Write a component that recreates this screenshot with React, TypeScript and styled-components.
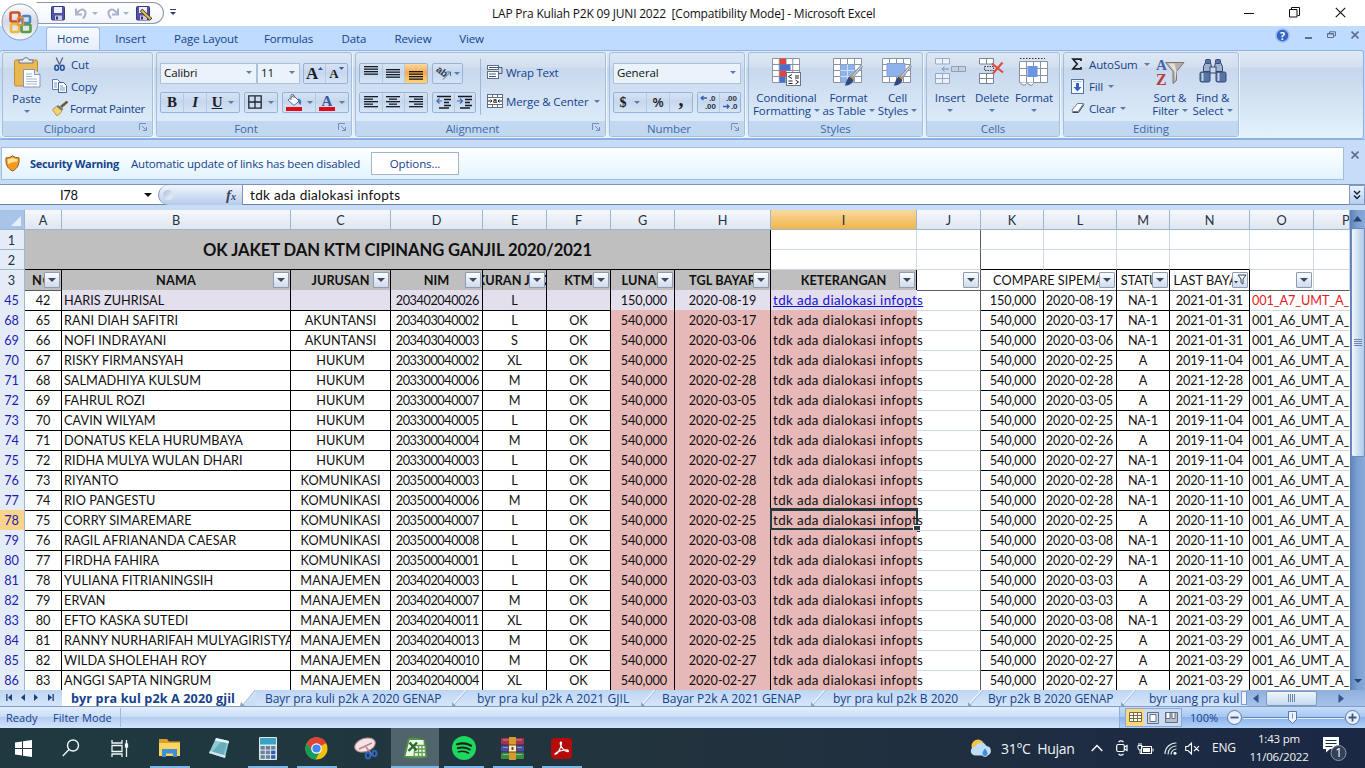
import React from "react";
import styled, { createGlobalStyle, css } from "styled-components";

const UI = `"Open Sans", "Noto Sans", sans-serif`;
const SHEET = `Lato, "Open Sans", sans-serif`;

const Global = createGlobalStyle`
  * { box-sizing: border-box; }
  body { margin: 0; background: #fff; overflow: hidden; }
`;

const Window = styled.div`
  width: 1365px;
  height: 768px;
  display: flex;
  flex-direction: column;
  overflow: hidden;
  font-family: ${UI};
  font-size: 11.5px;
  letter-spacing: -0.1px;
  color: #15428b;
  background: #bfdbff;
  white-space: nowrap;
`;

/* ---------- shared ---------- */

const Arrow = styled.i<{ $c?: string; $s?: number }>`
  display: inline-block;
  flex: none;
  width: 0;
  height: 0;
  border: ${(p) => p.$s ?? 3}px solid transparent;
  border-top-color: ${(p) => p.$c ?? "#5c7ba9"};
  border-bottom: 0;
`;
const Spacer = styled.span<{ $w: number; $grow?: boolean }>`
  width: ${(p) => p.$w}px;
  flex: ${(p) => (p.$grow ? 1 : "none")};
`;

/* ---------- title bar ---------- */

const Top = styled.header`
  position: relative;
  height: 50px;
  flex: none;
`;
const TitleBar = styled.div`
  height: 26px;
  background: #fff;
  display: flex;
  align-items: center;
`;
const Orb = styled.div`
  position: absolute;
  left: 1px;
  top: 3px;
  width: 38px;
  height: 38px;
`;
const QuickBar = styled.div`
  margin-left: 36px;
  width: 128px;
  height: 22px;
  border: 1px solid #8c98b0;
  border-left-color: transparent;
  border-radius: 0 11px 11px 0;
  display: flex;
  align-items: center;
  padding-left: 14px;
  background: linear-gradient(#fff, #f1f5fb);
`;
const QuickItem = styled.span<{ $w: number }>`
  width: ${(p) => p.$w}px;
  height: 16px;
  display: flex;
  align-items: center;
  flex: none;
`;
const MoreMark = styled.div`
  width: 6px;
  margin-left: 6px;
  margin-top: -2px;
  border-top: 1px solid #27406e;
  padding-top: 2px;
  display: flex;
  justify-content: center;
`;
const Caption = styled.div`
  margin-left: 316px;
  width: 400px;
  font-size: 12px;
  letter-spacing: -0.21px;
  color: #111;
  white-space: pre;
  padding-top: 1px;
`;
const WinButtons = styled.div`
  margin-left: auto;
  display: flex;
  gap: 0;
  padding: 0 19px 2px 0;
  svg { display: block; }
`;
const WinButton = styled.span<{ $ml?: number }>`
  margin-left: ${(p) => p.$ml ?? 0}px;
`;
const TabStrip = styled.nav`
  height: 24px;
  display: flex;
  align-items: flex-end;
  padding-left: 46px;
  background: #bfdbff;
`;
const RibbonTab = styled.div<{ $w: number; $on?: boolean }>`
  width: ${(p) => p.$w}px;
  height: 23px;
  line-height: 21px;
  text-align: center;
  font-size: 11.5px;
  border-radius: 3px 3px 0 0;
  border: 1px solid transparent;
  border-bottom: 0;
  ${(p) =>
    p.$on &&
    css`
      background: linear-gradient(#f7fbff, #e4eefa);
      border-color: #9cb9e0;
      box-shadow: inset 0 1px #fff;
    `}
`;
const TabTools = styled.div`
  margin-left: auto;
  display: flex;
  align-items: center;
  height: 26px;
  gap: 15px;
  padding: 0 6px 4px 0;
`;

/* ---------- ribbon ---------- */

const Ribbon = styled.section`
  height: 89px;
  flex: none;
  margin-right: 1px;
  padding: 1px 2px 0;
  display: flex;
  gap: 3px;
  border: 1px solid #8db2e3;
  border-left: 0;
  border-radius: 3px;
  background: linear-gradient(#dfe9f5 0, #d3e0f0 16px, #c5d6ec 17px, #e4f2fc 100%);
`;
const Group = styled.div<{ $w: number }>`
  width: ${(p) => p.$w}px;
  height: 85px;
  flex: none;
  display: flex;
  flex-direction: column;
  border: 1px solid #a4bfde;
  border-radius: 3px;
  overflow: hidden;
  box-shadow: 1px 1px #eef5fd;
  background: linear-gradient(#dde8f5 0, #d2dfef 14px, #c8d8ed 15px, #dcebfa 68px);
`;
const GroupBody = styled.div<{ $p?: string }>`
  height: 68px;
  display: flex;
  padding: ${(p) => p.$p ?? "0"};
`;
const GroupLabel = styled.div<{ $launch?: boolean }>`
  flex: 1;
  line-height: 15px;
  position: relative;
  text-align: center;
  color: #3e6aaa;
  background: #c2d8f1;
  padding-right: ${(p) => (p.$launch ? 16 : 0)}px;
  svg { position: absolute; right: 4px; top: 2px; }
`;
const Column = styled.div<{ $w?: number; $p?: string; $gap?: number }>`
  width: ${(p) => (p.$w ? p.$w + "px" : "auto")};
  flex: none;
  display: flex;
  flex-direction: column;
  padding: ${(p) => p.$p ?? "0"};
  gap: ${(p) => p.$gap ?? 0}px;
  align-items: flex-start;
`;
const Command = styled.div<{ $gap?: number; $ls?: number }>`
  height: 22px;
  display: flex;
  align-items: center;
  gap: ${(p) => p.$gap ?? 4}px;
  letter-spacing: ${(p) => p.$ls ?? -0.2}px;
`;
const BigCommand = styled.div<{ $w: number }>`
  width: ${(p) => p.$w}px;
  flex: none;
  display: flex;
  flex-direction: column;
  align-items: center;
  padding-top: 4px;
  line-height: 13px;
  letter-spacing: -0.1px;
  svg { display: block; margin-bottom: 4px; flex: none; }
`;
const Line = styled.span`
  display: flex;
  align-items: center;
  gap: 3px;
`;
const Drop = styled.span`
  height: 13px;
  display: flex;
  align-items: center;
`;
const ToolRow = styled.div<{ $gap?: number }>`
  display: flex;
  align-items: center;
  gap: ${(p) => p.$gap ?? 4}px;
  height: 22px;
`;
const Box = styled.div<{ $w: number }>`
  width: ${(p) => p.$w}px;
  height: 21px;
  display: flex;
  align-items: center;
  justify-content: space-between;
  padding: 0 4px 1px 3px;
  color: #111;
  background: #eaf2fb;
  border: 1px solid #abc1de;
`;
const Seg = styled.div`
  height: 21px;
  display: flex;
  border: 1px solid #97b3d8;
  border-radius: 2px;
  background: linear-gradient(#d6e3f3, #c6d7ed 45%, #d5e5f7);
`;
const SegItem = styled.div<{ $w: number; $on?: boolean; $last?: boolean; $gap?: number }>`
  width: ${(p) => p.$w}px;
  display: flex;
  align-items: center;
  justify-content: center;
  gap: ${(p) => p.$gap ?? 4}px;
  color: #1c1c28;
  border-right: ${(p) => (p.$last ? "0" : "1px solid #b4c9e4")};
  ${(p) => p.$on && css`background: linear-gradient(#fbd9a0, #f9a84a 45%, #ffd673);`}
`;
const Letter = styled.span<{ $size?: number; $i?: boolean; $u?: boolean; $up?: number }>`
  font: ${(p) => (p.$i ? "italic" : "normal")} bold ${(p) => p.$size ?? 14}px/15px "Liberation Serif", serif;
  text-decoration: ${(p) => (p.$u ? "underline" : "none")};
  padding-bottom: ${(p) => p.$up ?? 0}px;
`;
const Percent = styled.span`
  font-size: 13px;
  font-weight: 600;
`;
const SizeMark = styled.svg`
  align-self: flex-start;
  margin: 3px 0 0 -4px;
`;
const Rule = styled.div`
  width: 1px;
  height: 56px;
  margin: 6px 4px 0;
  background: #9bb7da;
`;

/* ---------- message + formula ---------- */

const MessageRow = styled.section`
  height: 45px;
  flex: none;
  padding-top: 7px;
  display: flex;
  background: #c6dcf8;
  border-top: 1px solid #8aaede;
`;
const Message = styled.div`
  width: 1343px;
  height: 33px;
  margin-left: 1px;
  display: flex;
  align-items: center;
  padding: 0 0 1px 3px;
  border: 1px solid #9fbedc;
  background: linear-gradient(#fff, #f1faff 45%, #e2f2fd);
  b { margin-left: 10px; width: 101px; letter-spacing: -0.32px; font-size: 11px; }
`;
const MessageText = styled.span`
  width: 240px;
  letter-spacing: -0.19px;
`;
const OptionButton = styled.div`
  width: 88px;
  height: 23px;
  line-height: 21px;
  text-align: center;
  background: #fff;
  border: 1px solid #9fb5d0;
`;
const MessageClose = styled.div`
  line-height: 0;
  padding: 4px 0 0 7px;
`;
const FormulaRow = styled.section`
  height: 26px;
  flex: none;
  display: flex;
  color: #111;
  font-family: ${SHEET};
  font-size: 13px;
  letter-spacing: 0;
  border-top: 1px solid #7b95b5;
  border-bottom: 5px solid #c9dcf5;
  background: #fff;
  box-shadow: inset 0 -1px #6c84a4;
`;
const NameBox = styled.div`
  width: 158px;
  display: flex;
  align-items: center;
  padding: 0 6px 0 60px;
  justify-content: space-between;
  letter-spacing: -0.3px;
`;
const FxArea = styled.div`
  width: 85px;
  height: 20px;
  display: flex;
  align-items: center;
  justify-content: space-between;
  padding: 0 6px 0 4px;
  border-radius: 10px 0 0 10px;
  border-left: 1px solid #8095b5;
  border-right: 1px solid #8095b5;
  background: linear-gradient(#f1f6fd, #b5cbec);
`;
const Knob = styled.span`
  width: 10px;
  height: 10px;
  border-radius: 50%;
  background: linear-gradient(135deg, #a9bcd9, #f4f8fd);
`;
const Fx = styled.i`
  font: italic bold 15px "Liberation Serif", serif;
  color: #39465e;
  small { font-size: 10px; }
`;
const FormulaText = styled.div`
  flex: 1;
  line-height: 21px;
  padding-left: 7px;
  font-size: 13.6px;
  letter-spacing: 0.27px;
`;
const Expand = styled.div`
  width: 16px;
  height: 20px;
  display: flex;
  align-items: center;
  justify-content: center;
  border: 1px solid #7f9bc4;
  background: linear-gradient(#e9f2fd, #b4cdee);
`;

/* ---------- grid ---------- */

const COLS = [25, 37, 229, 100, 92, 64, 64, 64, 96, 146, 64, 63, 73, 53, 80, 64, 36];
const TEMPLATE = COLS.map((c) => c + "px").join(" ");

const GridArea = styled.main`
  height: 480px;
  flex: none;
  display: flex;
  background: #fff;
`;
const Sheet = styled.div`
  width: 1350px;
  overflow: hidden;
  font-family: ${SHEET};
  font-size: 12.7px;
  letter-spacing: -0.1px;
  color: #111;
`;
const Row = styled.div`
  display: grid;
  grid-template-columns: ${TEMPLATE};
  height: 20px;
`;
const HeadCell = styled.div<{ $on?: boolean }>`
  text-align: center;
  line-height: 21px;
  color: #27303f;
  border-right: 1px solid #9eb6ce;
  border-bottom: 1px solid #9eb6ce;
  background: ${(p) =>
    p.$on ? "linear-gradient(#f9d99f, #f1b54c)" : "linear-gradient(#f6f9fc, #dfe6f1)"};
  overflow: hidden;
`;
const LastCol = styled.span`
  padding-left: 28px;
`;
const Corner = styled.div`
  background: #a9c4e9;
  border-right: 1px solid #9eb6ce;
  border-bottom: 1px solid #9eb6ce;
  display: flex;
  align-items: flex-end;
  justify-content: flex-end;
  padding: 3px;
`;
const RowHead = styled.div<{ $blue?: boolean; $on?: boolean }>`
  text-align: center;
  line-height: 20px;
  color: ${(p) => (p.$blue ? "#1d1db4" : "#27303f")};
  border-right: 1px solid #9eb6ce;
  border-bottom: 1px solid #9eb6ce;
  padding-right: 1px;
  background: ${(p) => (p.$on ? "#fbd48c" : "#e4ecf7")};
`;
type CellProps = {
  $bg?: string;
  $align?: string;
  $r?: string;
  $b?: string;
  $bold?: boolean;
  $clip?: boolean;
  $color?: string;
  $span?: number;
  $ls?: number;
};
const Cell = styled.div<CellProps>`
  position: relative;
  min-width: 0;
  display: flex;
  justify-content: ${(p) => p.$align ?? "center"};
  line-height: 20px;
  padding: 0 ${(p) => (p.$align === "flex-end" ? 3 : 2)}px;
  background: ${(p) => p.$bg ?? "transparent"};
  color: ${(p) => p.$color ?? "inherit"};
  font-weight: ${(p) => (p.$bold ? 700 : 400)};
  letter-spacing: ${(p) => p.$ls ?? -0.1}px;
  border-right: 1px solid ${(p) => p.$r ?? "#000"};
  border-bottom: 1px solid ${(p) => p.$b ?? "#000"};
  overflow: ${(p) => (p.$clip ? "hidden" : "visible")};
  ${(p) => p.$span && css`grid-column: span ${p.$span};`}
`;
const Pad = styled.span`
  padding-right: 4px;
`;
const Pad2 = styled.span`
  padding-right: 3px;
`;
const Over = styled.span`
  position: relative;
  z-index: 1;
  font-size: 13.4px;
  letter-spacing: 0.35px;
`;
const TitleRows = styled.div`
  display: grid;
  grid-template-columns: ${TEMPLATE};
  grid-template-rows: 20px 20px;
`;
const SheetTitle = styled.div`
  grid-column: 2 / 10;
  grid-row: 1 / 3;
  display: flex;
  align-items: center;
  justify-content: center;
  font-size: 16.6px;
  font-weight: 700;
  letter-spacing: -0.08px;
  background: #bfbfbf;
  border-right: 1px solid #000;
  border-bottom: 1px solid #000;
`;
const FilterBtn = styled.span`
  position: absolute;
  right: 1px;
  top: 2px;
  width: 16px;
  height: 16px;
  display: flex;
  align-items: center;
  justify-content: center;
  border: 1px solid #8d9bb3;
  border-radius: 1px;
  background: linear-gradient(#fbfcfe, #d0dbeb);
`;
const Link = styled.span`
  color: #1414d8;
  text-decoration: underline;
`;
const Picked = styled.span`
  position: absolute;
  left: -1px;
  top: -2px;
  width: 148px;
  height: 23px;
  border: 3px solid #26393c;
  border-left-width: 2px;
  border-right-width: 2px;
  &::after {
    content: "";
    position: absolute;
    right: -4px;
    bottom: -4px;
    width: 6px;
    height: 6px;
    background: #26393c;
    border-left: 1px solid #fff;
    border-top: 1px solid #fff;
  }
`;
const VScroll = styled.div`
  width: 15px;
  display: flex;
  flex-direction: column;
  align-items: center;
  background: linear-gradient(90deg, #5c83b8, #7ba0d2 50%, #86a9d9);
`;
const VButton = styled.div<{ $h: number }>`
  height: ${(p) => p.$h}px;
  display: flex;
  align-items: center;
`;
const VThumb = styled.div`
  width: 14px;
  height: 229px;
  display: flex;
  align-items: center;
  justify-content: center;
  border: 1px solid #6d8db8;
  border-radius: 2px;
  background: linear-gradient(90deg, #f3f8fe, #cfdff2 50%, #b2caea);
`;

/* ---------- sheet tabs / status ---------- */

const SheetTabs = styled.div`
  height: 17px;
  flex: none;
  display: flex;
  border-bottom: 1px solid #7f9cc3;
  background: linear-gradient(#bed5f2, #d6e6fa);
`;
const TabNav = styled.div`
  width: 62px;
  display: flex;
  align-items: center;
  padding: 0 5px 2px 3px;
`;
const SheetTab = styled.div<{ $w: number; $on?: boolean; $pad: number; $ls?: number }>`
  position: relative;
  width: ${(p) => p.$w}px;
  flex: none;
  padding-left: ${(p) => p.$pad}px;
  line-height: 17px;
  font-size: ${(p) => (p.$on ? 12.6 : 12)}px;
  font-weight: ${(p) => (p.$on ? 700 : 400)};
  letter-spacing: ${(p) => p.$ls ?? -0.05}px;
  background: ${(p) => (p.$on ? "#fff" : "transparent")};
  svg { position: absolute; right: -12px; top: 0; z-index: 1; }
`;
const Splitter = styled.div`
  width: 6px;
  height: 14px;
  margin-top: 1px;
  border: 1px solid #7d9cc8;
  background: #eef5fd;
`;
const HScroll = styled.div`
  flex: 1;
  display: flex;
  align-items: center;
  padding: 0 21px 0 6px;
  background: linear-gradient(#8fb0de, #a6c2e9);
`;
const HThumb = styled.div`
  width: 51px;
  height: 15px;
  margin: 0 auto 0 7px;
  display: flex;
  justify-content: center;
  align-items: center;
  border: 1px solid #7b98c0;
  border-radius: 2px;
  background: linear-gradient(#f0f6fd, #c5d8f0);
`;
const Status = styled.div`
  height: 21px;
  flex: none;
  display: flex;
  align-items: center;
  font-size: 11px;
  letter-spacing: 0.05px;
  background: linear-gradient(#e3effd, #cadef8 45%, #b4cdf0 50%, #d3e5fc);
`;
const StatusText = styled.span<{ $w: number; $ml: number }>`
  margin-left: ${(p) => p.$ml}px;
  padding-bottom: 1px;
  width: ${(p) => p.$w}px;
`;
const Divider = styled.span`
  width: 1px;
  height: 19px;
  background: #9dbbe2;
`;
const StatusRight = styled.div`
  margin-left: auto;
  width: 246px;
  height: 21px;
  display: flex;
  align-items: center;
  padding-left: 5px;
  border-left: 1px solid #8fb0db;
  background: linear-gradient(#c5dcfb, #a9c8f2 45%, #8cb3e9 50%, #b3d2fa);
`;
const Views = styled.div`
  display: flex;
  border: 1px solid #8ba9d0;
  height: 19px;
  width: 57px;
  background: #c9dcf4;
`;
const View = styled.span<{ $on?: boolean }>`
  width: 18.5px;
  display: flex;
  align-items: center;
  justify-content: center;
  background: ${(p) => (p.$on ? "#fbd87f" : "transparent")};
`;

/* ---------- taskbar ---------- */

const Taskbar = styled.footer`
  height: 40px;
  flex: none;
  display: flex;
  font-family: ${UI};
  color: #f2f5f7;
  letter-spacing: -0.2px;
  background: linear-gradient(90deg, #1e3a40, #22343d 45%, #1f2e40 70%, #1a2844);
`;
const Task = styled.div<{ $w: number; $open?: boolean; $on?: boolean }>`
  width: ${(p) => p.$w}px;
  display: flex;
  align-items: center;
  justify-content: center;
  ${(p) => p.$on && css`background: #50656b;`}
  ${(p) =>
    p.$open &&
    css`
      background-image: linear-gradient(#7ab6e6, #7ab6e6);
      background-repeat: no-repeat;
      background-position: bottom;
      background-size: ${p.$on ? "100%" : "40px"} 2px;
    `}
`;
const Tray = styled.div`
  margin-left: auto;
  width: 395px;
  display: flex;
  align-items: center;
`;
const Weather = styled.span`
  margin-left: 9px;
  width: 89px;
  font-size: 14px;
  letter-spacing: -0.3px;
  white-space: pre;
`;
const TrayIcon = styled.span<{ $w: number }>`
  width: ${(p) => p.$w}px;
  display: flex;
`;
const Lang = styled.span`
  width: 33px;
  font-size: 12px;
  padding-bottom: 2px;
`;
const Clock = styled.div`
  width: 68px;
  text-align: center;
  font-size: 11.5px;
  letter-spacing: -0.2px;
  line-height: 18px;
  padding-bottom: 1px;
`;

/* ---------- drawings ---------- */

const OfficeLogo = () => (
  <svg width="38" height="38" viewBox="0 0 38 38">
    <defs>
      <linearGradient id="orb" x1="0" y1="0" x2="0" y2="1">
        <stop offset="0" stopColor="#fff" />
        <stop offset=".5" stopColor="#d3dae6" />
        <stop offset="1" stopColor="#f8fbff" />
      </linearGradient>
    </defs>
    <circle cx="19" cy="19" r="18" fill="url(#orb)" stroke="#8a9ab4" />
    <g fill="none" strokeWidth="2.6" strokeLinejoin="round">
      <rect x="9.5" y="9.5" width="9" height="9" rx="1.500" stroke="#cf4f2a" />
      <rect x="21.5" y="13" width="7.500" height="7" rx="1.500" stroke="#4a86c4" />
      <rect x="10" y="21" width="8" height="8" rx="1.500" stroke="#efb93c" />
      <rect x="20.5" y="21.5" width="9" height="7.500" rx="1.500" stroke="#5a9a48" />
      <path d="M16.500 14.500h6v7.500h-6z" stroke="#e9953b" strokeWidth="1.300" />
    </g>
  </svg>
);
const Floppy = ({ pen }: { pen?: boolean }) => (
  <svg width="16" height="15" viewBox="0 0 16 15">
    <rect x=".5" y=".5" width="13" height="13.5" rx="1" fill="#5352a5" stroke="#37377e" />
    <rect x="3" y="1" width="8" height="6" fill="#eef1fa" />
    <rect x="4" y="9.5" width="7" height="4.5" fill="#c9cde6" />
    <rect x="5" y="10.5" width="2" height="3" fill="#37377e" />
    {pen && <path d="M5 4l10 9.500" stroke="#3a3320" strokeWidth="3.400" />}
    {pen && <path d="M5.500 4.500l9 8.500" stroke="#e8c34a" strokeWidth="2" />}
  </svg>
);
const Undo = ({ flip }: { flip?: boolean }) => (
  <svg width="14" height="13" viewBox="0 0 14 13">
    <g transform={flip ? "translate(14 0) scale(-1 1)" : undefined} fill="none" stroke="#a9b3c8" strokeWidth="2">
      <path d="M2 1.500v6h6" />
      <path d="M3 6.500C5 3 8 1.500 10.500 3.500c2 2 1 5-1.500 8" />
    </g>
  </svg>
);
const PasteIcon = () => (
  <svg width="28" height="31" viewBox="0 0 28 31">
    <rect x="1.500" y="3" width="23" height="26" rx="1.500" fill="#eab755" stroke="#c58a2f" />
    <path d="M6 6V3h4c0-3 6-3 6 0h4v3z" fill="#e8edf3" stroke="#6d7786" />
    <path d="M10.500 12.500h11l5.500 5V30H10.500z" fill="#fbfdff" stroke="#8496b3" />
    <path d="M21.500 12.500v5H27" fill="#dbe5f2" stroke="#8496b3" />
    <path d="M13 17h6M13 19.500h6M13 22h11M13 24.500h11M13 27h11" stroke="#a5b7d1" />
  </svg>
);
const CutIcon = () => (
  <svg width="15" height="15" viewBox="0 0 16 15" fill="none">
    <path d="M4.500 0l4 8.500M11.500 0l-4 8.500" stroke="#5b6c8c" strokeWidth="1.500" />
    <ellipse cx="5" cy="11" rx="2" ry="2.600" stroke="#28509b" strokeWidth="1.600" />
    <ellipse cx="11" cy="11" rx="2" ry="2.600" stroke="#28509b" strokeWidth="1.600" />
  </svg>
);
const CopyIcon = () => (
  <svg width="15" height="14" viewBox="0 0 15 14">
    <path d="M.5 .5h5l3 3v7h-8z" fill="#fff" stroke="#5b7cb0" />
    <path d="M6.500 3.500h5l3 3v7h-8z" fill="#fff" stroke="#41649c" />
    <path d="M2 4h3M2 6h3M2 8h3M8 7h3M8 9h5M8 11h5" stroke="#7897c4" />
  </svg>
);
const BrushIcon = () => (
  <svg width="16" height="15" viewBox="0 0 16 15">
    <path d="M15.500 0.500L9 6" stroke="#6d5a34" strokeWidth="2.600" />
    <path d="M6 4l5.500 4-1.800 1.600L4.500 5.500z" fill="#6b7484" />
    <path d="M4.500 5.500l5.300 4.200C9 12 7 14 4.500 14.500L0.500 8.500z" fill="#f3d272" stroke="#a98322" strokeWidth=".8" />
  </svg>
);
const Launcher = () => (
  <svg width="9" height="9" viewBox="0 0 9 9" fill="none" stroke="#6f8fbd">
    <path d="M.5 7V.5H7" />
    <path d="M3 3l4 4M7.500 4v3.500H4" />
  </svg>
);
const Lines = ({ rows, y = 0 }: { rows: [number, number][]; y?: number }) => (
  <svg width="15" height="14" viewBox="0 0 15 14">
    {rows.map(([x, w], i) => (
      <rect key={i} x={x} y={y + i * 2.500} width={w} height="1.300" fill="#151a26" />
    ))}
  </svg>
);
const Indent = ({ out }: { out?: boolean }) => (
  <svg width="16" height="14" viewBox="0 0 16 14">
    <path d="M1 1.500h14M8 4.500h7M8 7.500h5M8 10.500h7M3 12.900h10" stroke="#151a26" strokeWidth="1.500" />
    <path d={out ? "M6 6H1M3.500 3.500L1 6l2.500 2.500" : "M0 6h5M3 3.500L5.500 6 3 8.500"} stroke="#3d67b0" fill="none" strokeWidth="1.200" />
  </svg>
);
const Orient = () => (
  <svg width="17" height="16" viewBox="0 0 17 16">
    <text x="0" y="9" transform="rotate(38 5 8)" fontSize="10" fontFamily="Liberation Sans" fontWeight="700" fill="#333b4c">ab</text>
    <path d="M8 14.500L15 7.500M11.500 7h4v4" stroke="#4f668d" fill="none" />
  </svg>
);
const WrapIcon = () => (
  <svg width="16" height="16" viewBox="0 0 16 16" fill="none">
    <rect x=".5" y="1.500" width="11" height="4" fill="#fff" stroke="#5c6d88" />
    <rect x=".5" y="7.500" width="11" height="7" fill="#fff" stroke="#5c6d88" />
    <path d="M2 3.500h13v6h-3M2 10h7M2 12.500h7" stroke="#4c5870" />
  </svg>
);
const MergeIcon = () => (
  <svg width="16" height="16" viewBox="0 0 16 16" fill="none">
    <rect x=".5" y="1.500" width="15" height="13" fill="#fff" stroke="#5c6d88" />
    <path d="M5.500 1.500v3M10.500 1.500v3M5.500 11.500v3M10.500 11.500v3M.5 4.500h15M.5 11.500h15" stroke="#5c6d88" />
    <path d="M1 8h4M15 8h-4M3.500 6.500L5 8 3.500 9.500M12.500 6.500L11 8l1.500 1.500" stroke="#222" />
    <text x="6" y="10" fontSize="7" fontFamily="Liberation Sans" fontWeight="700" fill="#222">a</text>
  </svg>
);
const BordersIcon = () => (
  <svg width="14" height="14" viewBox="0 0 14 14" fill="none" stroke="#1d2433">
    <path d="M.8 .8h12.400v12.400H.8zM7 1v12M1 7h12" strokeWidth="1.300" />
  </svg>
);
const BucketIcon = () => (
  <svg width="18" height="17" viewBox="0 0 18 17">
    <path d="M3 6l5.500-4.500L14 7l-5 4.500z" fill="#f5f8fc" stroke="#5f6e87" />
    <path d="M6 6V1.500c0-1.500 3-1.500 3 0V4" fill="none" stroke="#5f6e87" />
    <path d="M13 4.500c3 .5 4 3 2.500 6.500-2-1-2.500-3-2.500-6.500z" fill="#4474b8" />
    <rect x="1" y="13" width="16" height="4" fill="#e30b17" />
  </svg>
);
const FontColorIcon = () => (
  <svg width="16" height="17" viewBox="0 0 16 17">
    <text x="2.500" y="11.500" fontSize="15" fontFamily="Liberation Serif" fontWeight="700" fill="#35599c">A</text>
    <rect x="0" y="13" width="16" height="4" fill="#e30b17" />
  </svg>
);
const Decimals = ({ top, bottom, left }: { top: string; bottom: string; left?: boolean }) => (
  <svg width="18" height="16" viewBox="0 0 18 16">
    <g fontFamily="Liberation Sans" fontWeight="700" fontSize="8" fill="#2a3347">
      <text x={left ? 9 : 5} y="7">{top}</text>
      <text x={left ? 5 : 10} y="15">{bottom}</text>
    </g>
    <path d={left ? "M7 4H1M3.500 2L1 4l2.500 2" : "M2 12.500h6M6 10.500l2 2-2 2"} stroke="#2f62b5" fill="none" strokeWidth="1.300" />
  </svg>
);
const cellGrid = (x: number, y: number, w: number, h: number, nx: number, ny: number) => {
  let d = `M${x} ${y}h${w}v${h}h${-w}z`;
  for (let i = 1; i < nx; i++) d += `M${x + (w * i) / nx} ${y}v${h}`;
  for (let i = 1; i < ny; i++) d += `M${x} ${y + (h * i) / ny}h${w}`;
  return d;
};
const Brush = () => (
  <g>
    <path d="M29 8.500L19 20" stroke="#8c96a8" strokeWidth="3" />
    <path d="M29 8.500L19 20" stroke="#e3e8ef" strokeWidth="1" />
    <path d="M16.500 19.500l4 3c-1 4-4 6-9 6 2-2 1.500-6 5-9z" fill="#33497c" />
    <path d="M17 18.500l3.500 3.200" stroke="#b99a3d" strokeWidth="2.200" />
  </g>
);
const CondIcon = () => (
  <svg width="30" height="30" viewBox="0 0 30 30">
    <path d={cellGrid(0.5, 1.500, 27, 24, 4, 4)} fill="#fff" stroke="#8a93a3" />
    <path d="M7.500 1.500h6.500v6H7.500zM7.500 13.500h6.500v6H7.500z" fill="#e0443a" />
    <path d="M7.500 7.500h11v6h-11zM7.500 19.500h6v6h-6z" fill="#4a6fd0" />
    <rect x="14.500" y="15.500" width="14" height="13" fill="#fff" stroke="#6b7486" />
    <path d="M20 17.500l-3.500 2 3.500 2M16.500 24h4M16.500 26.500h4M23 19h4M23 21h4M23.500 23l3 2-3 2" stroke="#222" fill="none" />
  </svg>
);
const TableIcon = () => (
  <svg width="31" height="30" viewBox="0 0 31 30">
    <path d={cellGrid(0.5, 1.500, 28, 24, 4, 4)} fill="#fff" stroke="#8a93a3" />
    <path d="M7.500 7.500h14v18h-14z" fill="#8fb2ec" />
    <path d="M7.500 13.500h14M7.500 19.500h14M14.500 7.500v18" stroke="#cfdef7" />
    <Brush />
  </svg>
);
const StylesIcon = () => (
  <svg width="31" height="30" viewBox="0 0 31 30">
    <path d={cellGrid(0.5, 1.500, 28, 24, 4, 4)} fill="#fff" stroke="#8a93a3" />
    <path d="M5 6.500h18v13H5z" fill="#8fb2ec" stroke="#7f9fd8" />
    <Brush />
  </svg>
);
const InsertIcon = () => (
  <svg width="31" height="30" viewBox="0 0 31 30" opacity=".75">
    <path d={cellGrid(0.5, 1.500, 14, 5.500, 2, 1) + cellGrid(0.5, 16.500, 14, 10, 2, 2)} fill="#f4f8fd" stroke="#8898b3" />
    <path d={cellGrid(16.500, 9.500, 14, 5, 2, 1)} fill="#c3cddd" stroke="#7f8ca3" />
    <path d="M14 12H7M9.500 9.500L7 12l2.500 2.500" stroke="#5d79ab" fill="none" />
  </svg>
);
const DeleteIcon = () => (
  <svg width="27" height="30" viewBox="0 0 27 30">
    <path d={cellGrid(0.5, 1.500, 14, 5.500, 2, 1) + cellGrid(0.5, 16.500, 14, 10, 2, 2)} fill="#fff" stroke="#7b8596" />
    <path d="M5.500 9.500h9v4h-9z" fill="none" stroke="#444" strokeDasharray="1.500 1" />
    <path d="M13 6.500l11 9M23.500 5.500L14 16.500" stroke="#e5483a" strokeWidth="2" />
  </svg>
);
const FormatIcon = () => (
  <svg width="30" height="30" viewBox="0 0 30 30">
    <path d="M1 1.500h25" stroke="#333" strokeDasharray="1.500 1.500" />
    <path d={cellGrid(0.5, 4.500, 28, 21, 4, 3)} fill="#fff" stroke="#8a93a3" />
    <rect x="8.500" y="9" width="10" height="11" fill="#6c95e2" />
    <path d="M1 25.500c3 4 6 3 7 0 3 4 6 3 7 0" fill="#fff" stroke="#777f8c" />
  </svg>
);
const SigmaIcon = () => (
  <svg width="12" height="12" viewBox="0 0 12 12">
    <path d="M10 3V1.200H2L6.200 6 2 10.800h8V9" fill="none" stroke="#1b1f2a" strokeWidth="1.700" />
  </svg>
);
const FillIcon = () => (
  <svg width="13" height="15" viewBox="0 0 13 15">
    <rect x=".5" y=".5" width="12" height="14" fill="#f5f9ff" stroke="#54719f" />
    <path d="M5 4h3v4h2.500l-4 4.500-4-4.500H5z" fill="#2e62c4" />
    <path d="M2 2.500h9" stroke="#b3c6e4" />
  </svg>
);
const EraserIcon = () => (
  <svg width="14" height="12" viewBox="0 0 14 12">
    <path d="M6.500 1.500h6L7 9.500H1.500L1 8z" fill="#fdfeff" stroke="#6a7a94" />
    <path d="M1.500 10.500h6l5.500-8" fill="none" stroke="#39465c" />
  </svg>
);
const SortIcon = () => (
  <svg width="30" height="30" viewBox="0 0 30 30">
    <text x="1" y="13" fontSize="15" fontFamily="Liberation Serif" fontWeight="700" fill="#3f63a8">A</text>
    <text x="1" y="27.500" fontSize="16" fontFamily="Liberation Serif" fontWeight="700" fill="#b83a3f">Z</text>
    <path d="M10.500 5.500h18.500l-7.500 9v9l-3.500 3V14.500z" fill="#b6b0aa" stroke="#7d7772" />
    <path d="M13.500 6.500h6l2 8-1 9-1-9z" fill="#e3dfda" />
  </svg>
);
const FindIcon = () => (
  <svg width="28" height="30" viewBox="0 0 28 30">
    <g fill="#5773a8" stroke="#35486f">
      <path d="M6.500 5.500h5l1 4v5h-8v-5zM16.500 5.500h5l2 4v5h-8v-5z" fill="#9fb1cf" />
      <rect x="6.500" y="2.500" width="5" height="4" rx="1" />
      <rect x="16.500" y="2.500" width="5" height="4" rx="1" />
      <rect x="1" y="15" width="10" height="10" rx="1.500" />
      <rect x="17" y="15" width="10" height="10" rx="1.500" />
      <rect x="11" y="10" width="6" height="6" fill="#cdd8e9" />
    </g>
    <path d="M3.500 16v8M19.500 16v8" stroke="#c6d4ea" strokeWidth="2" />
  </svg>
);
const Shield = () => (
  <svg width="15" height="17" viewBox="0 0 15 17">
    <path d="M7.500 .8C5.500 2.300 3.500 2.800 1 2.800c-.5 6 1 10.500 6.500 13.200C13 13.300 14.500 8.800 14 2.800c-2.500 0-4.500-.5-6.500-2z" fill="#f59a1b" stroke="#8a5b22" />
    <path d="M7.500 2.500C6 3.600 4.500 4 2.500 4.200c0 2 .2 3.500.8 5C6 7.500 9 6.500 12 7c.5-1 .6-2 .5-2.800-2-.2-3.500-.6-5-1.700z" fill="#ffe19a" />
  </svg>
);
const X = ({ s = 9, c = "#5c6f8c", w = 2 }: { s?: number; c?: string; w?: number }) => (
  <svg width={s} height={s} viewBox="0 0 10 10">
    <path d="M.7 .7l8.600 8.600M9.300 .7L.7 9.300" stroke={c} strokeWidth={w} />
  </svg>
);
const Slant = () => (
  <svg width="16" height="16" viewBox="0 0 16 16">
    <path d="M0 16L14 0" stroke="#f4f9ff" strokeWidth="1.500" />
    <path d="M1 16L15 0" stroke="#9db7d8" strokeWidth="1" />
    <path d="M0 12l4 4H0z" fill="#8ba3c4" />
  </svg>
);
const SlantActive = () => (
  <svg width="16" height="16" viewBox="0 0 16 16">
    <path d="M4 0h12v16H2z" fill="#cadef6" />
    <path d="M0 0h15L3 16H0z" fill="#fff" />
    <path d="M2 16L15 0" stroke="#9db7d8" />
    <path d="M1 12l4 4H0z" fill="#8ba3c4" />
  </svg>
);
const NavArrow = ({ left, bar }: { left?: boolean; bar?: boolean }) => (
  <svg width="13" height="9" viewBox="0 0 13 9">
    <g transform={left ? "translate(13 0) scale(-1 1)" : undefined} fill="#1f3f77">
      <path d="M4 1l4 3.500L4 8z" />
      {bar && <rect x="8.500" y="1" width="1.300" height="7" />}
    </g>
  </svg>
);
const Side = ({ left }: { left?: boolean }) => (
  <svg width="6" height="9" viewBox="0 0 6 9">
    <path d={left ? "M5.500 0v9L0 4.500z" : "M.5 0v9L6 4.500z"} fill="#33558d" />
  </svg>
);
const Zoom = ({ plus }: { plus?: boolean }) => (
  <svg width="17" height="17" viewBox="0 0 17 17">
    <circle cx="8.500" cy="8.500" r="7" fill="#e6effb" stroke="#5c79a6" />
    <path d={plus ? "M4.500 8.500h8M8.500 4.500v8" : "M4.500 8.500h8"} stroke="#41597f" strokeWidth="1.800" />
  </svg>
);
const Slider = () => (
  <svg width="101" height="17" viewBox="0 0 101 17">
    <path d="M0 8.500h101" stroke="#6485b8" />
    <path d="M0 9.500h101" stroke="#e1edfc" />
    <path d="M45.500 2.500h8v8l-4 4-4-4z" fill="#e9f1fb" stroke="#5c79a6" />
    <path d="M49.500 4.500v5" stroke="#7d92b4" />
  </svg>
);

const Windows = () => (
  <svg width="17" height="17" viewBox="0 0 17 17" fill="#fff">
    <path d="M0 2.500L7 1.500V8H0zM8 1.300L17 0v8H8zM0 9h7v6.500L0 14.500zM8 9h9v8l-9-1.300z" />
  </svg>
);
const SearchGlyph = () => (
  <svg width="18" height="18" viewBox="0 0 18 18" fill="none" stroke="#f2f5f7" strokeWidth="1.400">
    <circle cx="11" cy="6.500" r="5.500" />
    <path d="M7 10.500L.8 17" />
  </svg>
);
const TaskView = () => (
  <svg width="18" height="17" viewBox="0 0 18 17" fill="none" stroke="#f2f5f7" strokeWidth="1.300">
    <path d="M1 0v3h10V0M1 17v-3h10v3M1 5.500h10v6H1zM15.500 0v17" />
    <rect x="14.500" y="4" width="2" height="3" fill="#f2f5f7" />
  </svg>
);
const Explorer = () => (
  <svg width="23" height="20" viewBox="0 0 23 20">
    <path d="M1 1h8l2 2.500h11V18H1z" fill="#dc9f2e" />
    <path d="M1 5h21v13H1z" fill="#fbd560" />
    <path d="M4 19v-8h15v8h-4v-3.500H8V19z" fill="#3f8fd6" />
  </svg>
);
const Notepad = () => (
  <svg width="22" height="22" viewBox="0 0 22 22">
    <path d="M8 1l13 3-4 17L1 16z" fill="#8cc8d3" />
    <path d="M8 1l13 3-.6 2.500L7 3.500z" fill="#e9f5f7" />
    <path d="M13 5l6 1-4 13-11-4z" fill="#4f9fae" opacity=".6" />
    <path d="M1 16l16 5 .5-2.500-15.500-4.500z" fill="#d4e8ec" />
  </svg>
);
const Calc = () => (
  <svg width="18" height="23" viewBox="0 0 18 23">
    <rect width="18" height="23" rx="1" fill="#dfe8ee" />
    <rect x="1" y="1" width="16" height="6.500" fill="#3aa3c4" />
    {[0, 1, 2].flatMap((r) =>
      [0, 1, 2].map((c) => (
        <rect key={`${r}${c}`} x={1.500 + c * 5.300} y={9 + r * 4.600} width="4.300" height="3.600" fill={c === 2 && r ? "#2d5fae" : "#6b8399"} />
      ))
    )}
  </svg>
);
const Chrome = () => (
  <svg width="23" height="23" viewBox="0 0 24 24">
    <circle cx="12" cy="12" r="11.500" fill="#f4c20d" />
    <path d="M12 12L2 6.300A11.500 11.500 0 0 1 22 6.300z" fill="#db4437" />
    <path d="M12 6.500h10.200A11.500 11.500 0 0 0 2 6.200L7 15z" fill="#db4437" />
    <path d="M2 6.200A11.500 11.500 0 0 0 11 23.500l5-9-8.500.5z" fill="#0f9d58" />
    <circle cx="12" cy="12" r="5.500" fill="#fff" />
    <circle cx="12" cy="12" r="4.300" fill="#4285f4" />
  </svg>
);
const Snip = () => (
  <svg width="24" height="23" viewBox="0 0 24 23">
    <ellipse cx="11" cy="8" rx="10.500" ry="6.500" transform="rotate(-18 11 8)" fill="#f3e4e6" stroke="#c98f97" />
    <path d="M5 12l13-6M12 10l6 8" stroke="#b9858d" strokeWidth="1.500" />
    <g fill="none" stroke="#2f66c0" strokeWidth="2">
      <ellipse cx="14" cy="18.500" rx="2.300" ry="3" />
      <ellipse cx="20.500" cy="16.500" rx="2" ry="2.800" />
    </g>
  </svg>
);
const ExcelIcon = () => (
  <svg width="24" height="22" viewBox="0 0 24 22">
    <path d="M5 1.500Q14-1 22 3.500L23.500 20Q12 23 .5 20z" fill="#4f9440" />
    <path d="M6.500 3h14l1 16H2.500z" fill="#eef6e8" />
    <path d="M12 8.500h10l.8 11H11z" fill="#fff" stroke="#5f9f4d" strokeWidth="1.300" />
    <path d="M12 12h10.500M12 15.500h11M15.500 9v10M19 9v10" stroke="#5f9f4d" strokeWidth="1.300" />
    <path d="M6.500 5.500l7 8M14 5.500l-8.500 8.500" stroke="#2a6b30" strokeWidth="2.400" />
  </svg>
);
const Spotify = () => (
  <svg width="24" height="24" viewBox="0 0 24 24">
    <circle cx="12" cy="12" r="12" fill="#1ed760" />
    <g fill="none" stroke="#16241c" strokeLinecap="round">
      <path d="M5 8.300c5-1.500 10-1 14 1.300" strokeWidth="2.200" />
      <path d="M5.800 12.200c4-1.200 8.500-.7 12 1.300" strokeWidth="1.900" />
      <path d="M6.500 15.800c3.500-1 7-.6 10 1.200" strokeWidth="1.600" />
    </g>
  </svg>
);
const WinRar = () => (
  <svg width="25" height="23" viewBox="0 0 25 23">
    <rect x="1" y="1" width="23" height="6.500" rx="1" fill="#a8324a" />
    <rect x="1" y="8.500" width="23" height="6" rx="1" fill="#4a4bab" />
    <rect x="1" y="15.500" width="23" height="6.500" rx="1" fill="#3d8a45" />
    <path d="M3 3h19M3 10.500h19M3 17.500h19" stroke="#fff" opacity=".4" />
    <rect x="9" y="0" width="7" height="23" fill="#d89a2c" />
    <rect x="8.500" y="8" width="8" height="7" fill="#f5ebcd" stroke="#6b4d18" />
    <path d="M12.500 10v3" stroke="#6b4d18" strokeWidth="2" />
  </svg>
);
const Acrobat = () => (
  <svg width="21" height="21" viewBox="0 0 21 21">
    <rect width="21" height="21" rx="4" fill="#b50c0b" />
    <path d="M4 16c2 1 6-5 6.500-11 0-1.500-1.500-1-1.200.8C10 9.500 13 13 16.500 13.500c1.500 0 1-1.700-1-1.700-4 0-9.500 1.700-11.500 4.200z" fill="none" stroke="#fff" strokeWidth="1.300" />
  </svg>
);
const WeatherIcon = () => (
  <svg width="22" height="19" viewBox="0 0 22 19">
    <circle cx="8" cy="7" r="6.500" fill="#f5c443" />
    <path d="M5 16.500a4.500 4.500 0 0 1 .5-9A6 6 0 0 1 16.500 7a4.800 4.800 0 0 1 .5 9.500z" fill="#bcdcf7" />
    <path d="M15 8.500c2 3 3 4.500 3 6a3 3 0 0 1-6 0c0-1.500 1-3 3-6z" fill="#3b8ee0" stroke="#d6ebfc" strokeWidth=".8" />
  </svg>
);
const Chevron = () => (
  <svg width="12" height="8" viewBox="0 0 12 8" fill="none" stroke="#fff" strokeWidth="1.400">
    <path d="M.7 7L6 1.500 11.300 7" />
  </svg>
);
const Meet = () => (
  <svg width="12" height="16" viewBox="0 0 12 16" fill="none" stroke="#fff" strokeWidth="1.200">
    <rect x=".7" y="4.500" width="7.600" height="7" rx="1.500" />
    <path d="M8.500 7l2.500-1.500v5L8.500 9M2.500 2C4 .7 6 .7 7.500 2M2.500 14c1.500 1.300 3.500 1.300 5 0" />
  </svg>
);
const Battery = () => (
  <svg width="17" height="13" viewBox="0 0 17 13" fill="none" stroke="#fff">
    <rect x="4.500" y="4.500" width="10" height="7" />
    <rect x="6" y="6" width="7" height="4" fill="#fff" stroke="none" />
    <path d="M16 6.500v3M1 3.500h4v2.500a2 2 0 0 1-4 0zM2 1v2.500M4 1v2.500M3 8v3.500h1.500" />
  </svg>
);
const Wifi = () => (
  <svg width="13" height="13" viewBox="0 0 13 13" fill="none" stroke="#dfe4ea" strokeWidth="1.200">
    <path d="M1 12A11 11 0 0 1 12.500 1M4 12.500A8 8 0 0 1 12.500 4M7 12.500A5.500 5.500 0 0 1 12.500 7" />
    <circle cx="11" cy="11.300" r="1.500" fill="#fff" stroke="none" />
  </svg>
);
const Mute = () => (
  <svg width="15" height="13" viewBox="0 0 15 13" fill="none" stroke="#fff" strokeWidth="1.100">
    <path d="M.7 4.500H3L6.500 1v11L3 8.500H.7zM9 4.200l5 5M14 4.200l-5 5" />
  </svg>
);
const Notice = () => (
  <svg width="25" height="25" viewBox="0 0 25 25">
    <path d="M1 1h16v12H8l-4 3.500V13H1z" fill="#fff" />
    <path d="M3.500 4.500h11M3.500 7.500h11M3.500 10.500h7" stroke="#1b2b44" />
    <circle cx="16.500" cy="17" r="7.500" fill="#33405a" stroke="#8f98a8" />
    <text x="16.500" y="21" textAnchor="middle" fontSize="12" fontFamily="Open Sans" fill="#fff">1</text>
  </svg>
);
const FunnelMark = () => (
  <svg width="14" height="12" viewBox="0 0 14 12">
    <path d="M5 1h8l-3 4v5l-2-1.500V5z" fill="#fff" stroke="#30405c" />
    <path d="M1 7h4L3 9.500z" fill="#30405c" />
  </svg>
);

/* ---------- data ---------- */

type Student = [number, number, string, string, string, string, string, string, string];
const rows: Student[] = [
  [68, 65, "RANI DIAH SAFITRI", "AKUNTANSI", "203403040002", "L", "2020-03-17", "NA-1", "2021-01-31"],
  [69, 66, "NOFI INDRAYANI", "AKUNTANSI", "203403040003", "S", "2020-03-06", "NA-1", "2021-01-31"],
  [70, 67, "RISKY FIRMANSYAH", "HUKUM", "203300040002", "XL", "2020-02-25", "A", "2019-11-04"],
  [71, 68, "SALMADHIYA KULSUM", "HUKUM", "203300040006", "M", "2020-02-28", "A", "2021-12-28"],
  [72, 69, "FAHRUL ROZI", "HUKUM", "203300040007", "M", "2020-03-05", "A", "2021-11-29"],
  [73, 70, "CAVIN WILYAM", "HUKUM", "203300040005", "L", "2020-02-25", "NA-1", "2019-11-04"],
  [74, 71, "DONATUS KELA HURUMBAYA", "HUKUM", "203300040004", "M", "2020-02-26", "A", "2019-11-04"],
  [75, 72, "RIDHA MULYA WULAN DHARI", "HUKUM", "203300040003", "L", "2020-02-27", "NA-1", "2019-11-04"],
  [76, 73, "RIYANTO", "KOMUNIKASI", "203500040003", "L", "2020-02-28", "NA-1", "2020-11-10"],
  [77, 74, "RIO PANGESTU", "KOMUNIKASI", "203500040006", "M", "2020-02-28", "NA-1", "2020-11-10"],
  [78, 75, "CORRY SIMAREMARE", "KOMUNIKASI", "203500040007", "L", "2020-02-25", "A", "2020-11-10"],
  [79, 76, "RAGIL AFRIANANDA CAESAR", "KOMUNIKASI", "203500040008", "L", "2020-03-08", "NA-1", "2020-11-10"],
  [80, 77, "FIRDHA FAHIRA", "KOMUNIKASI", "203500040001", "L", "2020-02-29", "NA-1", "2020-11-10"],
  [81, 78, "YULIANA FITRIANINGSIH", "MANAJEMEN", "203402040003", "L", "2020-03-03", "A", "2021-03-29"],
  [82, 79, "ERVAN", "MANAJEMEN", "203402040007", "M", "2020-03-03", "A", "2021-03-29"],
  [83, 80, "EFTO KASKA SUTEDI", "MANAJEMEN", "203402040011", "XL", "2020-03-08", "NA-1", "2021-03-29"],
  [84, 81, "RANNY NURHARIFAH MULYAGIRISTYA", "MANAJEMEN", "203402040013", "M", "2020-02-25", "A", "2021-03-29"],
  [85, 82, "WILDA SHOLEHAH ROY", "MANAJEMEN", "203402040010", "M", "2020-02-27", "A", "2021-03-29"],
  [86, 83, "ANGGI SAPTA NINGRUM", "MANAJEMEN", "203402040004", "XL", "2020-02-27", "A", "2021-03-29"],
];
const NOTE = "tdk ada dialokasi infopts";
const GL = "#d0d7e5";
const PINK = "#e6b8b7";
const LILAC = "#e4dfec";
const GRAY = "#bfbfbf";
const FREEZE = "#555c66";
const NIM_LS = -0.42;

const Filter = ({ on }: { on?: boolean }) => (
  <FilterBtn>{on ? <FunnelMark /> : <Arrow $c="#3c4a63" $s={4} />}</FilterBtn>
);

const DataRow = ({ r }: { r: Student }) => (
  <Row>
    <RowHead $blue $on={r[0] === 78}>{r[0]}</RowHead>
    <Cell>{r[1]}</Cell>
    <Cell $align="flex-start" $clip $ls={0.08}>{r[2]}</Cell>
    <Cell $ls={0.02}>{r[3]}</Cell>
    <Cell $align="flex-end" $ls={NIM_LS}>{r[4]}</Cell>
    <Cell>{r[5]}</Cell>
    <Cell>OK</Cell>
    <Cell $bg={PINK} $align="flex-end"><Pad>540,000</Pad></Cell>
    <Cell $bg={PINK}>{r[6]}</Cell>
    <Cell $bg={PINK} $align="flex-start" $r={PINK} $b={PINK}>
      <Over>{NOTE}</Over>
      {r[0] === 78 && <Picked />}
    </Cell>
    <Cell $r={FREEZE} $b={GL} />
    <Cell $align="flex-end"><Pad>540,000</Pad></Cell>
    <Cell $align="flex-end">{r[6]}</Cell>
    <Cell>{r[7]}</Cell>
    <Cell $align="flex-end"><Pad2>{r[8]}</Pad2></Cell>
    <Cell $align="flex-start" $r="transparent" $b={GL}>001_A6_UMT_A_</Cell>
    <Cell $r="transparent" $b={GL} />
  </Row>
);

const headings: [string, number][] = [
  ["NO", 1],
  ["NAMA", 0.1],
  ["JURUSAN", 0.05],
  ["NIM", 0],
  ["UKURAN JAKET", 0],
  ["KTM", 0],
  ["LUNAS", 0.1],
  ["TGL BAYAR", 0.1],
  ["KETERANGAN", 0],
];
const tabs: [string, number, number, number][] = [
  ["Bayr pra kuli p2k A 2020 GENAP", 212, 21, -0.03],
  ["byr pra kul p2k A 2021 GJIL", 189, 21, 0.1],
  ["Bayar P2k A 2021 GENAP", 170, 17, 0],
  ["byr pra kul p2k B 2020", 157, 18, 0],
  ["Byr p2k B 2020 GENAP", 153, 16, -0.03],
];
const L14: [number, number][] = [[0, 14], [0, 14], [0, 14], [0, 14]];
const SIDE_COLS = [0, 1, 2, 3, 4, 5, 6, 7];

export default function App() {
  return (
    <Window>
      <Global />
      <Top>
        <TitleBar>
          <QuickBar>
            <QuickItem $w={23}><Floppy /></QuickItem>
            <QuickItem $w={18}><Undo /></QuickItem>
            <QuickItem $w={14}><Arrow $c="#a9b3c8" /></QuickItem>
            <QuickItem $w={17}><Undo flip /></QuickItem>
            <QuickItem $w={13}><Arrow $c="#a9b3c8" /></QuickItem>
            <QuickItem $w={16}><Floppy pen /></QuickItem>
          </QuickBar>
          <MoreMark><Arrow $c="#27406e" $s={3} /></MoreMark>
          <Caption>LAP Pra Kuliah P2K 09 JUNI 2022  [Compatibility Mode] - Microsoft Excel</Caption>
          <WinButtons>
            <WinButton>
              <svg width="10" height="11"><path d="M0 6.500h10" stroke="#111" /></svg>
            </WinButton>
            <WinButton $ml={35}>
              <svg width="11" height="11" fill="none" stroke="#111">
                <path d="M.5 2.500h7.500v7.500H.5zM2.500 2.500V.5h8v8H8.500" />
              </svg>
            </WinButton>
            <WinButton $ml={35}><X s={11} c="#111" w={1} /></WinButton>
          </WinButtons>
        </TitleBar>
        <TabStrip>
          <RibbonTab $w={54} $on>Home</RibbonTab>
          <RibbonTab $w={61}>Insert</RibbonTab>
          <RibbonTab $w={90}>Page Layout</RibbonTab>
          <RibbonTab $w={75}>Formulas</RibbonTab>
          <RibbonTab $w={56}>Data</RibbonTab>
          <RibbonTab $w={62}>Review</RibbonTab>
          <RibbonTab $w={55}>View</RibbonTab>
          <TabTools>
            <svg width="15" height="15" viewBox="0 0 15 15">
              <circle cx="7.500" cy="7.500" r="6.500" fill="#3266c0" stroke="#9dbbea" strokeWidth="1.500" />
              <text x="7.500" y="11.500" textAnchor="middle" fontSize="10.500" fontWeight="700" fontFamily="Open Sans" fill="#fff">?</text>
            </svg>
            <svg width="7" height="10"><path d="M0 8h7" stroke="#5c6f8c" strokeWidth="2" /></svg>
            <svg width="9" height="9" fill="none" stroke="#5c6f8c">
              <path d="M.5 2.500h6v4h-6zM2.500 2V.8h6v4H7M.5 3h6" />
            </svg>
            <X s={8} />
          </TabTools>
        </TabStrip>
        <Orb><OfficeLogo /></Orb>
      </Top>

      <Ribbon>
        <Group $w={151}>
          <GroupBody>
            <BigCommand $w={47}>
              <PasteIcon />
              Paste
              <Drop><Arrow /></Drop>
            </BigCommand>
            <Column $p="0 0 0 2px">
              <Command><CutIcon />Cut</Command>
              <Command><CopyIcon />Copy</Command>
              <Command $gap={2} $ls={-0.38}><BrushIcon />Format Painter</Command>
            </Column>
          </GroupBody>
          <GroupLabel $launch>Clipboard<Launcher /></GroupLabel>
        </Group>

        <Group $w={196}>
          <GroupBody>
            <Column $p="9px 0 0 3px" $gap={7}>
              <ToolRow $gap={0}>
                <Box $w={97}>Calibri<Arrow /></Box>
                <Box $w={43}>11<Arrow /></Box>
                <Spacer $w={3} />
                <Seg>
                  <SegItem $w={22}>
                    <Letter $size={17}>A</Letter>
                    <SizeMark width="5" height="3"><path d="M0 3L2.500 0 5 3z" fill="#35599c" /></SizeMark>
                  </SegItem>
                  <SegItem $w={21} $last>
                    <Letter $size={13}>A</Letter>
                    <SizeMark width="5" height="3"><path d="M0 0L2.500 3 5 0z" fill="#35599c" /></SizeMark>
                  </SegItem>
                </Seg>
              </ToolRow>
              <ToolRow>
                <Seg>
                  <SegItem $w={23}><Letter $size={15}>B</Letter></SegItem>
                  <SegItem $w={23}><Letter $size={15} $i>I</Letter></SegItem>
                  <SegItem $w={32} $last $gap={6}><Letter $size={15} $u>U</Letter><Arrow /></SegItem>
                </Seg>
                <Seg><SegItem $w={32} $last $gap={6}><BordersIcon /><Arrow /></SegItem></Seg>
                <Seg>
                  <SegItem $w={33}><BucketIcon /><Arrow /></SegItem>
                  <SegItem $w={32} $last><FontColorIcon /><Arrow /></SegItem>
                </Seg>
              </ToolRow>
            </Column>
          </GroupBody>
          <GroupLabel $launch>Font<Launcher /></GroupLabel>
        </Group>

        <Group $w={251}>
          <GroupBody>
            <Column $p="9px 0 0 3px" $gap={7}>
              <ToolRow>
                <Seg>
                  <SegItem $w={23}><Lines rows={L14} /></SegItem>
                  <SegItem $w={22}><Lines rows={L14} y={3} /></SegItem>
                  <SegItem $w={22} $on $last><Lines rows={L14} y={5} /></SegItem>
                </Seg>
                <Seg><SegItem $w={29} $last $gap={2}><Orient /><Arrow /></SegItem></Seg>
              </ToolRow>
              <ToolRow>
                <Seg>
                  <SegItem $w={23}><Lines y={1} rows={[[0, 14], [0, 9], [0, 14], [0, 9], [0, 14]]} /></SegItem>
                  <SegItem $w={22}><Lines y={1} rows={[[0, 14], [3, 8], [0, 14], [3, 8], [0, 14]]} /></SegItem>
                  <SegItem $w={22} $last><Lines y={1} rows={[[0, 14], [5, 9], [0, 14], [5, 9], [0, 14]]} /></SegItem>
                </Seg>
                <Seg>
                  <SegItem $w={22}><Indent out /></SegItem>
                  <SegItem $w={20} $last><Indent /></SegItem>
                </Seg>
              </ToolRow>
            </Column>
            <Rule />
            <Column $p="8px 0 0 2px" $gap={7}>
              <Command $gap={3} $ls={-0.25}><WrapIcon />Wrap Text</Command>
              <Command $gap={3} $ls={-0.15}><MergeIcon />Merge &amp; Center<Spacer $w={0} /><Arrow /></Command>
            </Column>
          </GroupBody>
          <GroupLabel $launch>Alignment<Launcher /></GroupLabel>
        </Group>

        <Group $w={136}>
          <GroupBody>
            <Column $p="9px 0 0 3px" $gap={7}>
              <ToolRow><Box $w={128}>General<Arrow /></Box></ToolRow>
              <ToolRow>
                <Seg>
                  <SegItem $w={33} $gap={8}><Letter>$</Letter><Arrow /></SegItem>
                  <SegItem $w={23}><Percent>%</Percent></SegItem>
                  <SegItem $w={22} $last><Letter $size={20} $up={6}>,</Letter></SegItem>
                </Seg>
                <Seg>
                  <SegItem $w={22}><Decimals left top=".0" bottom=".00" /></SegItem>
                  <SegItem $w={20} $last><Decimals top=".00" bottom=".0" /></SegItem>
                </Seg>
              </ToolRow>
            </Column>
          </GroupBody>
          <GroupLabel $launch>Number<Launcher /></GroupLabel>
        </Group>

        <Group $w={175}>
          <GroupBody $p="0 0 0 2px">
            <BigCommand $w={71}><CondIcon /><span>Conditional</span><Line>Formatting <Arrow /></Line></BigCommand>
            <BigCommand $w={53}><TableIcon /><span>Format</span><Line>as Table <Arrow /></Line></BigCommand>
            <BigCommand $w={45}><StylesIcon /><span>Cell</span><Line>Styles <Arrow /></Line></BigCommand>
          </GroupBody>
          <GroupLabel>Styles</GroupLabel>
        </Group>

        <Group $w={134}>
          <GroupBody $p="0 0 0 2px">
            <BigCommand $w={42}><InsertIcon /><span>Insert</span><Drop><Arrow /></Drop></BigCommand>
            <BigCommand $w={42}><DeleteIcon /><span>Delete</span><Drop><Arrow /></Drop></BigCommand>
            <BigCommand $w={42}><FormatIcon /><span>Format</span><Drop><Arrow /></Drop></BigCommand>
          </GroupBody>
          <GroupLabel>Cells</GroupLabel>
        </Group>

        <Group $w={176}>
          <GroupBody>
            <Column $w={84} $p="0 0 0 7px">
              <Command $gap={6} $ls={-0.1}><SigmaIcon />AutoSum <Arrow /></Command>
              <Command $gap={5}><FillIcon />Fill <Arrow /></Command>
              <Command $gap={4}><EraserIcon />Clear <Arrow /></Command>
            </Column>
            <BigCommand $w={44}><SortIcon /><span>Sort &amp;</span><Line>Filter <Arrow /></Line></BigCommand>
            <BigCommand $w={41}><FindIcon /><span>Find &amp;</span><Line>Select <Arrow /></Line></BigCommand>
          </GroupBody>
          <GroupLabel>Editing</GroupLabel>
        </Group>
      </Ribbon>

      <MessageRow>
        <Message>
          <Shield />
          <b>Security Warning</b>
          <MessageText>Automatic update of links has been disabled</MessageText>
          <OptionButton>Options...</OptionButton>
        </Message>
        <MessageClose><X s={8} /></MessageClose>
      </MessageRow>

      <FormulaRow>
        <NameBox>I78<Arrow $c="#111" $s={4} /></NameBox>
        <FxArea><Knob /><Fx>f<small>x</small></Fx></FxArea>
        <FormulaText>{NOTE}</FormulaText>
        <Expand>
          <svg width="8" height="10" fill="none" stroke="#16233c" strokeWidth="1.500">
            <path d="M1 1l3 3 3-3M1 5.500l3 3 3-3" />
          </svg>
        </Expand>
      </FormulaRow>

      <GridArea>
        <Sheet>
          <Row>
            <Corner>
              <svg width="10" height="10"><path d="M10 0v10H0z" fill="#e6effa" /></svg>
            </Corner>
            {"ABCDEFGHIJKLMNO".split("").map((c) => (
              <HeadCell key={c} $on={c === "I"}>{c}</HeadCell>
            ))}
            <HeadCell><LastCol>P</LastCol></HeadCell>
          </Row>
          <TitleRows>
            <RowHead>1</RowHead>
            <SheetTitle>OK JAKET DAN KTM CIPINANG GANJIL 2020/2021</SheetTitle>
            {SIDE_COLS.map((i) => (
              <Cell key={i} $r={i === 1 ? FREEZE : GL} $b={GL} />
            ))}
            <RowHead>2</RowHead>
            {SIDE_COLS.map((i) => (
              <Cell key={i} $r={i === 1 ? FREEZE : GL} $b={i > 1 && i < 6 ? "#000" : GL} />
            ))}
          </TitleRows>
          <Row>
            <RowHead>3</RowHead>
            {headings.map(([t, ls]) => (
              <Cell key={t} $bg={GRAY} $bold $clip $b={FREEZE} $ls={ls}>
                <span>{t}</span>
                <Filter />
              </Cell>
            ))}
            <Cell $r={FREEZE} $b={FREEZE}><Filter /></Cell>
            <Cell $span={2} $clip $b={FREEZE} $ls={0.05}>COMPARE SIPEMA<Filter /></Cell>
            <Cell $clip $b={FREEZE}>STATUS<Filter /></Cell>
            <Cell $clip $b={FREEZE} $ls={0.05}>LAST BAYAR<Filter on /></Cell>
            <Cell $r={GL} $b={FREEZE}><Filter /></Cell>
            <Cell $r={GL} $b={FREEZE} />
          </Row>
          <Row>
            <RowHead $blue>45</RowHead>
            <Cell>42</Cell>
            <Cell $bg={LILAC} $align="flex-start" $ls={0.02}>HARIS ZUHRISAL</Cell>
            <Cell $bg={LILAC} />
            <Cell $bg={LILAC} $align="flex-end" $ls={NIM_LS}>203402040026</Cell>
            <Cell $bg={LILAC}>L</Cell>
            <Cell $bg={LILAC} />
            <Cell $bg={LILAC} $align="flex-end"><Pad>150,000</Pad></Cell>
            <Cell $bg={LILAC}>2020-08-19</Cell>
            <Cell $bg={LILAC} $align="flex-start" $r={LILAC} $b={LILAC}><Over><Link>{NOTE}</Link></Over></Cell>
            <Cell $r={FREEZE} $b={GL} />
            <Cell $align="flex-end"><Pad>150,000</Pad></Cell>
            <Cell $align="flex-end">2020-08-19</Cell>
            <Cell>NA-1</Cell>
            <Cell $align="flex-end"><Pad2>2021-01-31</Pad2></Cell>
            <Cell $align="flex-start" $r="transparent" $b={GL} $color="#e01b22">001_A7_UMT_A_</Cell>
            <Cell $r="transparent" $b={GL} />
          </Row>
          {rows.map((r) => (
            <DataRow key={r[0]} r={r} />
          ))}
        </Sheet>
        <VScroll>
          <VButton $h={18}>
            <svg width="9" height="6"><path d="M4.500 0L9 5.500H0z" fill="#24446f" /></svg>
          </VButton>
          <VThumb>
            <svg width="8" height="8"><path d="M0 .5h8M0 2.500h8M0 4.500h8M0 6.500h8" stroke="#6d87ab" /></svg>
          </VThumb>
          <Spacer $w={1} $grow />
          <VButton $h={18}><Arrow $c="#24446f" $s={4} /></VButton>
        </VScroll>
      </GridArea>

      <SheetTabs>
        <TabNav>
          <NavArrow left bar /><NavArrow left /><Spacer $w={1} /><NavArrow /><Spacer $w={1} /><NavArrow bar />
        </TabNav>
        <SheetTab $w={182} $pad={9} $on $ls={0.12}>byr pra kul p2k A 2020 gjil<SlantActive /></SheetTab>
        {tabs.map(([t, w, p, ls]) => (
          <SheetTab key={t} $w={w} $pad={p} $ls={ls}>{t}<Slant /></SheetTab>
        ))}
        <SheetTab $w={116} $pad={24}>byr uang pra kul</SheetTab>
        <Splitter />
        <HScroll>
          <Side left />
          <HThumb>
            <svg width="8" height="8"><path d="M.5 0v8M2.500 0v8M4.500 0v8M6.500 0v8" stroke="#6d87ab" /></svg>
          </HThumb>
          <Side />
        </HScroll>
      </SheetTabs>

      <Status>
        <StatusText $ml={6} $w={47}>Ready</StatusText>
        <StatusText $ml={0} $w={67}>Filter Mode</StatusText>
        <Divider />
        <StatusRight>
          <Views>
            <View $on>
              <svg width="13" height="11"><path d={cellGrid(0.5, 0.5, 12, 9, 3, 3)} fill="#fff" stroke="#7a6a3c" /></svg>
            </View>
            <View>
              <svg width="12" height="12" fill="none" stroke="#5f6f87">
                <path d="M.5 .5h11v11H.5z" fill="#d2dae6" /><path d="M3 2.500h6v7H3z" fill="#fff" />
              </svg>
            </View>
            <View>
              <svg width="13" height="12" fill="none" stroke="#5f6f87">
                <path d="M.5 .5h12v10H.5z" fill="#b5bfce" /><path d="M1 .5h4v6H1zM7 .5h3v6H7z" fill="#fff" />
              </svg>
            </View>
          </Views>
          <StatusText $ml={8} $w={36}>100%</StatusText>
          <Zoom />
          <Slider />
          <Zoom plus />
        </StatusRight>
      </Status>

      <Taskbar>
        <Task $w={47}><Windows /></Task>
        <Task $w={48}><SearchGlyph /></Task>
        <Task $w={50}><TaskView /></Task>
        <Task $w={49} $open><Explorer /></Task>
        <Task $w={49}><Notepad /></Task>
        <Task $w={49} $open><Calc /></Task>
        <Task $w={49} $open><Chrome /></Task>
        <Task $w={50}><Snip /></Task>
        <Task $w={48} $open $on><ExcelIcon /></Task>
        <Task $w={49} $open><Spotify /></Task>
        <Task $w={49} $open><WinRar /></Task>
        <Task $w={49} $open><Acrobat /></Task>
        <Tray>
          <WeatherIcon />
          <Weather>31°C  Hujan</Weather>
          <Spacer $w={1} />
          <TrayIcon $w={25}><Chevron /></TrayIcon>
          <TrayIcon $w={21}><Meet /></TrayIcon>
          <TrayIcon $w={27}><Battery /></TrayIcon>
          <TrayIcon $w={21}><Wifi /></TrayIcon>
          <TrayIcon $w={27}><Mute /></TrayIcon>
          <Lang>ENG</Lang>
          <Clock>1:43 pm<br />11/06/2022</Clock>
          <Spacer $w={9} />
          <Notice />
        </Tray>
      </Taskbar>
    </Window>
  );
}
